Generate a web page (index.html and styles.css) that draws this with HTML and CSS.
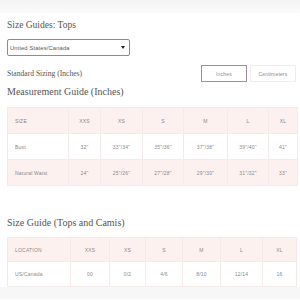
FILE: index.html
```html
<!DOCTYPE html>
<html>
<head>
<meta charset="utf-8">
<link rel="stylesheet" href="styles.css">
</head>
<body>
<div class="topband"></div>
<main class="page">
  <h1 class="title">Size Guides: Tops</h1>
  <div class="select">
    <span>United States/Canada</span>
    <span class="caret"></span>
  </div>
  <div class="unitrow">
    <span class="std">Standard Sizing (Inches)</span>
    <div class="toggles">
      <span class="btn active">Inches</span>
      <span class="btn">Centimeters</span>
    </div>
  </div>
  <h2 class="sub">Measurement Guide (Inches)</h2>
  <div class="grid g1">
    <div class="c l h">SIZE</div><div class="c h">XXS</div><div class="c h">XS</div><div class="c h">S</div><div class="c h">M</div><div class="c h">L</div><div class="c h">XL</div>
    <div class="c l">Bust</div><div class="c">32"</div><div class="c">33"/34"</div><div class="c">35"/36"</div><div class="c">37"/38"</div><div class="c">39"/40"</div><div class="c">41"</div>
    <div class="c l h">Natural Waist</div><div class="c h">24"</div><div class="c h">25"/26"</div><div class="c h">27"/28"</div><div class="c h">29"/30"</div><div class="c h">31"/32"</div><div class="c h">33"</div>
  </div>
  <h2 class="sub sub2">Size Guide (Tops and Camis)</h2>
  <div class="grid g2">
    <div class="c l h">LOCATION</div><div class="c h">XXS</div><div class="c h">XS</div><div class="c h">S</div><div class="c h">M</div><div class="c h">L</div><div class="c h">XL</div>
    <div class="c l">US/Canada</div><div class="c">00</div><div class="c">0/2</div><div class="c">4/6</div><div class="c">8/10</div><div class="c">12/14</div><div class="c">16</div>
  </div>
</main>
<div class="botband"></div>
</body>
</html>
```
FILE: styles.css
```css
html, body { margin: 0; padding: 0; background: #fff; }
body { width: 300px; height: 300px; overflow: hidden; font-family: "Liberation Sans", Arial, sans-serif; color: #555; }
.topband { height: 13px; background: linear-gradient(#f2f2f2, #fbfbfb); }
.page { padding: 0 3px 0 7px; }
.title { font-family: "Liberation Serif", "Times New Roman", serif; font-weight: normal; font-size: 9.5px; line-height: 10px; margin: 7px 0 0 0; color: #555; }
.select { margin-top: 9px; height: 15px; border: 1px solid #8c8c8c; border-radius: 2px; display: flex; align-items: center; justify-content: space-between; padding: 0 4px 0 2px; width: 115px; font-size: 5.8px; letter-spacing: 0.15px; color: #555; }
.caret { width: 0; height: 0; border-left: 2px solid transparent; border-right: 2px solid transparent; border-top: 3px solid #222; }
.unitrow { margin-top: 9px; display: flex; justify-content: space-between; align-items: center; height: 17px; }
.std { font-family: "Liberation Serif", "Times New Roman", serif; font-size: 7.6px; color: #555; }
.toggles { display: flex; gap: 3px; margin-right: 1px; }
.btn { width: 44px; height: 15px; border: 1px solid #eee; display: flex; align-items: center; justify-content: center; font-size: 5px; letter-spacing: 0.2px; color: #888; }
.btn.active { border-color: #a68a9e; }
.sub { font-family: "Liberation Serif", "Times New Roman", serif; font-weight: normal; font-size: 10px; line-height: 10px; margin: 5px 0 0 0; color: #555; }
.sub2 { margin-top: 32px; }
.grid { display: grid; margin-top: 10px; border-left: 1px solid #f3eaea; border-top: 1px solid #f3eaea; }
.g1 { grid-template-columns: 61px 32px 42px 41px 44px 41px 29px; grid-auto-rows: 26px; width: 290px; }
.g2 { grid-template-columns: 63px 39px 36px 37px 38px 42px 34px; grid-template-rows: 24px 25px; width: 289px; margin-top: 9px; }
.c { display: flex; align-items: center; justify-content: center; font-size: 5px; letter-spacing: 0.2px; color: #888; border-right: 1px solid #f3eaea; border-bottom: 1px solid #f3eaea; }
.c.l { justify-content: flex-start; padding-left: 7px; }
.c.h { background: #fdf1f0; }
.botband { height: 12px; background: #f7f7f7; }
```
